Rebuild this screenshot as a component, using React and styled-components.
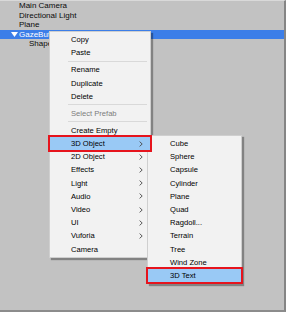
import React from "react";
import styled, { createGlobalStyle } from "styled-components";

const Global = createGlobalStyle`
  html, body { margin: 0; padding: 0; background: #c2c2c2; }
  * { box-sizing: border-box; }
`;

const Frame = styled.div`
  position: relative;
  width: 286px;
  height: 312px;
  overflow: hidden;
  background: #c2c2c2;
  border-top: 1px solid #d9d9d9;
  border-right: 2px solid #858585;
  border-bottom: 2px solid #8c8c8c;
  font-family: "Liberation Sans", Arial, sans-serif;
`;

const Hierarchy = styled.div`
  display: flex;
  flex-direction: column;
`;

const Row = styled.div`
  display: flex;
  align-items: center;
  height: 9.5px;
  padding-left: ${(p) => (p.$level === 2 ? 29 : 19)}px;
  font-size: 8px;
  white-space: nowrap;
  color: ${(p) => (p.$selected ? "#ffffff" : "#0a0a0a")};
  background: ${(p) => (p.$selected ? "#3c7ee8" : "transparent")};
`;

const Toggle = styled.span`
  width: 7px;
  margin-left: -8px;
  margin-right: 1px;
  display: flex;
  align-items: center;
  justify-content: center;
`;

const Menu = styled.div`
  position: absolute;
  left: ${(p) => p.$left}px;
  top: ${(p) => p.$top}px;
  width: ${(p) => p.$width}px;
  z-index: ${(p) => p.$layer || "auto"};
  display: flex;
  flex-direction: column;
  padding: 1px 0;
  background: #f2f2f2;
  border: 1px solid #cfcfcf;
  box-shadow: 2px 2px 1px rgba(0, 0, 0, 0.33);
  font-size: 7.6px;
`;

const Item = styled.div`
  position: relative;
  z-index: ${(p) => (p.$marked ? 5 : "auto")};
  display: flex;
  align-items: center;
  justify-content: space-between;
  height: 13.2px;
  padding-left: ${(p) => p.$indent}px;
  padding-right: 7px;
  white-space: nowrap;
  color: ${(p) => (p.$disabled ? "#7c7c7c" : "#000000")};
  background: ${(p) => (p.$marked ? "#99c9f5" : "transparent")};
  outline: ${(p) => (p.$marked ? "2.3px solid #e6141d" : "none")};
  outline-offset: -0.5px;
`;

const Separator = styled.div`
  height: 3.9px;
  display: flex;
  align-items: center;
  padding-left: 18px;
  padding-right: 3px;
  &::after {
    content: "";
    flex: 1;
    height: 1px;
    background: #d9d9d9;
  }
`;

const Chevron = () => (
  <svg width="4" height="6" viewBox="0 0 4 6">
    <path d="M0.6 0.6 L3.2 3 L0.6 5.4" fill="none" stroke="#4a4a4a" strokeWidth="0.9" />
  </svg>
);

const TriangleDown = () => (
  <svg width="7" height="5" viewBox="0 0 7 5">
    <path d="M0 0 H7 L3.5 5 Z" fill="#ffffff" />
  </svg>
);

const mainItems = [
  { label: "Copy" },
  { label: "Paste" },
  { sep: true },
  { label: "Rename" },
  { label: "Duplicate" },
  { label: "Delete" },
  { sep: true },
  { label: "Select Prefab", disabled: true },
  { sep: true },
  { label: "Create Empty" },
  { label: "3D Object", sub: true, marked: true },
  { label: "2D Object", sub: true },
  { label: "Effects", sub: true },
  { label: "Light", sub: true },
  { label: "Audio", sub: true },
  { label: "Video", sub: true },
  { label: "UI", sub: true },
  { label: "Vuforia", sub: true },
  { label: "Camera" },
];

const subItems = [
  "Cube",
  "Sphere",
  "Capsule",
  "Cylinder",
  "Plane",
  "Quad",
  "Ragdoll...",
  "Terrain",
  "Tree",
  "Wind Zone",
  "3D Text",
];

export default function App() {
  return (
    <>
      <Global />
      <Frame>
        <Hierarchy>
          <Row>Main Camera</Row>
          <Row>Directional Light</Row>
          <Row>Plane</Row>
          <Row $selected>
            <Toggle>
              <TriangleDown />
            </Toggle>
            GazeButton
          </Row>
          <Row $level={2}>Shape</Row>
        </Hierarchy>

        <Menu $left={49} $top={30} $width={102}>
          {mainItems.map((it, i) =>
            it.sep ? (
              <Separator key={i} />
            ) : (
              <Item key={i} $indent={21} $disabled={it.disabled} $marked={it.marked}>
                <span>{it.label}</span>
                {it.sub && <Chevron />}
              </Item>
            )
          )}
        </Menu>

        <Menu $left={147} $top={134} $width={95} $layer={2}>
          {subItems.map((label) => (
            <Item key={label} $indent={22} $marked={label === "3D Text"}>
              <span>{label}</span>
            </Item>
          ))}
        </Menu>
      </Frame>
    </>
  );
}
